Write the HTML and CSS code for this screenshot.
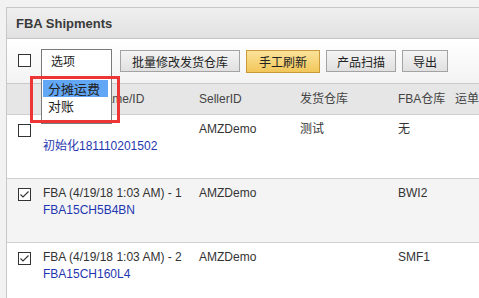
FILE: index.html
```html
<!DOCTYPE html>
<html lang="zh-CN">
<head>
  <meta charset="UTF-8" />
  <title>FBA Shipments</title>
  <link rel="stylesheet" href="styles.css">
</head>
<body>
  <div class="panel">
    <div class="panel-title">FBA Shipments</div>

    <div class="toolbar">
      <span class="check"></span>
      <div class="select">
        <span class="select-label">选项</span>
        <div class="select-list">
          <div class="option active">分摊运费</div>
          <div class="option">对账</div>
        </div>
        <div class="mark"></div>
      </div>
      <button class="btn btn-long">批量修改发货仓库</button>
      <button class="btn btn-warn">手工刷新</button>
      <button class="btn">产品扫描</button>
      <button class="btn">导出</button>
    </div>

    <div class="row head">
      <div></div>
      <div>Shipment Name/ID</div>
      <div>SellerID</div>
      <div>发货仓库</div>
      <div>FBA仓库</div>
      <div>运单</div>
    </div>

    <div class="row">
      <div><span class="check"></span></div>
      <div><br><a class="sid">初始化181110201502</a></div>
      <div>AMZDemo</div>
      <div>测试</div>
      <div>无</div>
      <div></div>
    </div>

    <div class="row alt">
      <div><span class="check checked"><svg viewBox="0 0 13 13" width="13" height="13"><path d="M2.5 6.5 L5 9 L10.5 3.5" fill="none" stroke="#333" stroke-width="1.1"/></svg></span></div>
      <div>FBA (4/19/18 1:03 AM) - 1<br><a class="sid">FBA15CH5B4BN</a></div>
      <div>AMZDemo</div>
      <div></div>
      <div>BWI2</div>
      <div></div>
    </div>

    <div class="row">
      <div><span class="check checked"><svg viewBox="0 0 13 13" width="13" height="13"><path d="M2.5 6.5 L5 9 L10.5 3.5" fill="none" stroke="#333" stroke-width="1.1"/></svg></span></div>
      <div>FBA (4/19/18 1:03 AM) - 2<br><a class="sid">FBA15CH160L4</a></div>
      <div>AMZDemo</div>
      <div></div>
      <div>SMF1</div>
      <div></div>
    </div>
  </div>
</body>
</html>
```

FILE: styles.css
```css
html, body {
  overflow: hidden;
}

body {
  margin: 0;
  background: #f2f2f2;
  font-family: "Liberation Sans", Arial, "Noto Sans CJK SC", sans-serif;
  font-size: 12px;
  color: #333;
}

.panel {
  margin: 7px 0 0 6px;
  width: 640px;
  height: 400px;
  background: #fff;
  border: 1px solid #c8c8c8;
}

.panel-title {
  height: 30px;
  line-height: 31px;
  padding-left: 9px;
  font-size: 13px;
  font-weight: bold;
  color: #3a3a3a;
  background: linear-gradient(#f0f0f0, #e1e1e1);
  border-bottom: 1px solid #c4c4c4;
}

.toolbar {
  display: flex;
  align-items: center;
  height: 44px;
  padding-left: 11px;
  background: linear-gradient(#fff, #f3f3f3);
  border-bottom: 1px solid #c8c8c8;
}

.check {
  display: block;
  box-sizing: border-box;
  width: 13px;
  height: 13px;
  border: 1px solid #333;
  background: #fff;
}

.check svg {
  display: block;
  margin: -1px;
}

.toolbar .check {
  margin-top: -2px;
}

.select {
  position: relative;
  box-sizing: border-box;
  width: 71px;
  height: 23px;
  margin: -1px 8px 0 10px;
  border: 1px solid #7a7a7a;
  border-bottom: none;
  background: #fff;
  font-family: "Noto Sans CJK SC", sans-serif;
}

.select-label {
  display: block;
  padding-left: 9px;
  line-height: 21px;
  color: #222;
}

.select-list {
  position: absolute;
  z-index: 2;
  top: 22px;
  left: -1px;
  width: 71px;
  height: 52px;
  box-sizing: border-box;
  padding: 8px 3px 0 1px;
  border: 1px solid #7a7a7a;
  border-top: none;
  background: #fff;
  font-size: 13px;
}

.option {
  height: 17px;
  line-height: 17px;
  padding-left: 5px;
  color: #222;
}

.option.active {
  background: #62a7f6;
}

.mark {
  position: absolute;
  z-index: 3;
  top: 26px;
  left: -12px;
  width: 84px;
  height: 41px;
  border: 3px solid #ee3535;
}

.btn {
  height: 22px;
  margin-right: 6px;
  padding: 0 10px;
  font-family: "Noto Sans CJK SC", sans-serif;
  font-size: 12px;
  color: #222;
  background: linear-gradient(#f4f4f4, #e0e0e0);
  border: 1px solid #a3a3a3;
  border-radius: 0;
}

.btn-long {
  padding: 0 11px;
}

.btn-warn {
  height: 23px;
  padding: 0 12px;
  background: linear-gradient(#fbe39a, #f2c65a);
  border-color: #c99a37;
}

.row {
  display: grid;
  grid-template-columns: 36px 156px 101px 98px 57px 1fr;
  height: 64px;
  box-sizing: border-box;
  padding-top: 6px;
  line-height: 17px;
  border-bottom: 1px solid #cfcfcf;
  font-family: "Liberation Sans", Arial, "Noto Sans CJK SC", sans-serif;
  white-space: nowrap;
}

.row > div:first-child {
  padding: 3px 0 0 11px;
}

.row.head {
  height: 31px;
  padding-top: 0;
  line-height: 31px;
  background: #e6e6e6;
  color: #444;
}

.row.alt {
  background: #f4f4f4;
}

.sid {
  color: #1f37b0;
}
```
